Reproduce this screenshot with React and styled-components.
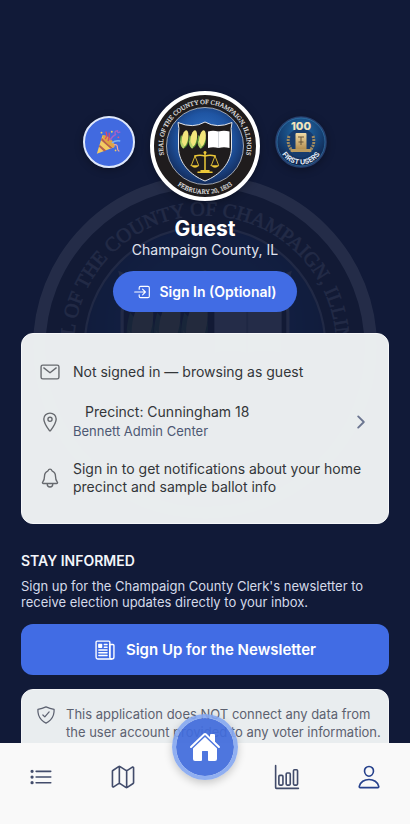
import React from "react";
import styled, { createGlobalStyle } from "styled-components";
import {
  IoBarChartOutline,
  IoChevronForward,
  IoEnterOutline,
  IoHome,
  IoListOutline,
  IoLocationOutline,
  IoMailOutline,
  IoMapOutline,
  IoNewspaperOutline,
  IoNotificationsOutline,
  IoPersonOutline,
  IoShieldCheckmarkOutline,
} from "react-icons/io5";

const CornEar = ({ x }) => (
  <g transform={`translate(${x} 39)`}>
    <path d="M-1 18.500 C-6 15 -4.500 9 -3.500 5 L0 9 Z" fill="#6da545" />
    <path d="M-1 18.500 C4 16 4.500 11 3.800 7 L0 11 Z" fill="#4c8a31" />
    <ellipse cx="0.500" cy="8.500" rx="3.200" ry="8.300" fill="#f2e67c" transform="rotate(10 0.500 8.500)" />
    <path d="M-4 10.500 C-4 14 -3 18 -1 18.500 C1 17.500 -1 14 -4 10.500 Z" fill="#b7d06c" />
  </g>
);

const Seal = ({ id }) => (
  <svg viewBox="0 0 110 110" width="100%" height="100%" aria-hidden="true">
    <defs>
      <radialGradient id={`${id}-blue`} cx="50%" cy="42%" r="58%">
        <stop offset="0" stopColor="#3476c9" />
        <stop offset="0.6" stopColor="#1f55a3" />
        <stop offset="1" stopColor="#132b5a" />
      </radialGradient>
      <path id={`${id}-top`} d="M37.300 152 A84 84 0 1 1 182.700 152" />
      <path id={`${id}-bottom`} d="M36.500 171.700 A96 96 0 0 0 183.500 171.700" />
    </defs>
    <circle cx="55" cy="55" r="53" fill="#1f1c1d" stroke="#ffffff" strokeWidth="4" />
    <circle cx="55" cy="55" r="38.5" fill={`url(#${id}-blue)`} stroke="#d5d8de" strokeWidth="0.7" />
    <g transform="scale(0.5)">
      <SealText>
        <textPath href={`#${id}-top`} startOffset="50%" textAnchor="middle">
          SEAL OF THE COUNTY OF CHAMPAIGN, ILLINOIS
        </textPath>
      </SealText>
      <SealText>
        <textPath href={`#${id}-bottom`} startOffset="50%" textAnchor="middle">
          FEBRUARY 20, 1833
        </textPath>
      </SealText>
    </g>
    <path
      d="M28 31.500 Q43 38 55 31 Q67 38 82 31.500 Q80.500 37 81.500 44 L81.500 57 C81 72 70 84 55 90 C40 84 29 72 28.500 57 L28.500 44 Q29.500 37 28 31.500 Z"
      fill="#1f1c1d"
      stroke="#e3e5ea"
      strokeWidth="1"
    />
    <CornEar x={34.5} />
    <CornEar x={43.2} />
    <CornEar x={51.9} />
    <path d="M58 40.500 Q63 39 68.500 40.500 Q74 39 79.500 40.500 V57 Q74 55.500 68.500 57 Q63 55.500 58 57 Z" fill="#ffffff" />
    <path d="M68.500 40.500 V57" stroke="#b9bdc4" strokeWidth="0.6" />
    <g stroke="#ecc838" strokeWidth="1.500" fill="none" strokeLinecap="round">
      <path d="M55 61.500 V80" />
      <path d="M45 65 Q50 63.500 55 65 Q60 63.500 65 65" />
      <path d="M45 65 L41.500 74 M45 65 L48.500 74 M65 65 L61.500 74 M65 65 L68.500 74" strokeWidth="0.9" />
      <path d="M41 74.500 H49 Q45 78.500 41 74.500 Z M61 74.500 H69 Q65 78.500 61 74.500 Z" fill="#ecc838" strokeWidth="0.5" />
      <path d="M48 81.300 H62 M51 79.800 H59" />
    </g>
    <circle cx="55" cy="61.500" r="1.500" fill="#ecc838" />
  </svg>
);

const PartyPopper = () => (
  <svg viewBox="0 0 32 32" width="30" height="30" aria-hidden="true">
    <path d="M3 28.500 L9 9 Q11 8 16.500 13 Q23 19 21.500 21.500 Z" fill="#f3cb62" />
    <path d="M8.300 11.500 L20 22 L17.500 23 L7.500 14 Z M6 18.800 L13 25 L10.700 26 L5.300 21 Z" fill="#b6604f" />
    <path d="M9 9 Q13 8 18 13 Q23 18 21.500 21.500 Q18 21.500 13.500 17 Q9 12.500 9 9 Z" fill="#dfa542" />
    <path d="M12 13 Q15 9 12.500 5 M15 15 Q17 9 16 6" stroke="#d94d6a" strokeWidth="1.500" fill="none" />
    <path d="M17 14 Q19 10 23 8 Q21 4.500 25 4 Q25 7.500 28 5" stroke="#a261c9" strokeWidth="1.500" fill="none" />
    <path d="M19 17 Q23 14 28 15" stroke="#7fb5f2" strokeWidth="1.500" fill="none" />
    <path d="M21 19 Q25 18 25 22 Q25 25 27 26" stroke="#f4a9a0" strokeWidth="1.300" fill="none" />
    <circle cx="8" cy="6" r="1" fill="#f6cf57" />
    <circle cx="19" cy="5" r="1" fill="#f6cf57" />
    <circle cx="26" cy="11" r="1" fill="#e8577a" />
    <circle cx="23" cy="25" r="0.900" fill="#f6cf57" />
  </svg>
);

const FirstUsersBadge = () => (
  <svg viewBox="0 0 52 52" width="100%" height="100%" aria-hidden="true">
    <defs>
      <radialGradient id="users-blue" cx="50%" cy="30%" r="65%">
        <stop offset="0" stopColor="#2270ad" />
        <stop offset="0.6" stopColor="#164377" />
        <stop offset="1" stopColor="#10234a" />
      </radialGradient>
      <linearGradient id="users-gold" x1="0" y1="0" x2="0" y2="1">
        <stop offset="0" stopColor="#f1dba6" />
        <stop offset="1" stopColor="#b18a4c" />
      </linearGradient>
      <path id="users-arc" d="M3.500 26 A22.500 22.500 0 0 0 48.500 26" />
    </defs>
    <circle cx="26" cy="26" r="25" fill="url(#users-blue)" stroke="#27406f" strokeWidth="1.500" />
    <circle cx="26" cy="26" r="24" fill="none" stroke="#347aae" strokeWidth="0.7" />
    <circle cx="26" cy="27" r="14.500" fill="#173c6e" />
    <path d="M14 20 Q11 30 19 36 M38 20 Q41 30 33 36" fill="none" stroke="#a08b60" strokeWidth="3" strokeDasharray="2 1" />
    <rect x="20.500" y="17" width="11" height="17" rx="1" fill="url(#users-gold)" />
    <path d="M23 21 H29 M26 21 V29 M23.500 26 H28.500" stroke="#695438" strokeWidth="1" />
    <rect x="15.500" y="33" width="21" height="3" rx="1" fill="#b99a60" />
    <BadgeNumber x="26" y="14" textAnchor="middle">100</BadgeNumber>
    <BadgeLabel>
      <textPath href="#users-arc" startOffset="50%" textAnchor="middle">
        FIRST USERS
      </textPath>
    </BadgeLabel>
  </svg>
);

const App = () => {
  return (
    <Shell>
      <GlobalStyle />
      <Scroller>
        <Watermark>
          <Seal id="watermark" />
        </Watermark>
        <Profile>
          <Emblems>
            <Badge $filled>
              <PartyPopper />
            </Badge>
            <Avatar>
              <Seal id="avatar" />
            </Avatar>
            <Badge>
              <FirstUsersBadge />
            </Badge>
          </Emblems>
          <Name>Guest</Name>
          <County>Champaign County, IL</County>
          <SignInButton type="button">
            <IoEnterOutline size={18} />
            Sign In (Optional)
          </SignInButton>
        </Profile>

        <Card>
          <Row>
            <IoMailOutline size={22} />
            <RowText>Not signed in — browsing as guest</RowText>
          </Row>
          <RowLink href="#precinct">
            <IoLocationOutline size={22} />
            <RowText>
              <Precinct>Precinct: Cunningham 18</Precinct>
              <Place>Bennett Admin Center</Place>
            </RowText>
            <IoChevronForward size={20} />
          </RowLink>
          <Row>
            <IoNotificationsOutline size={22} />
            <RowText>
              Sign in to get notifications about your home precinct and sample
              ballot info
            </RowText>
          </Row>
        </Card>

        <Newsletter>
          <SectionTitle>STAY INFORMED</SectionTitle>
          <SectionText>
            Sign up for the Champaign County Clerk's newsletter to receive
            election updates directly to your inbox.
          </SectionText>
          <NewsletterButton type="button">
            <IoNewspaperOutline size={22} />
            Sign Up for the Newsletter
          </NewsletterButton>
        </Newsletter>

        <Notice>
          <IoShieldCheckmarkOutline size={20} />
          <NoticeText>
            This application does NOT connect any data from the user account
            provided to any voter information.
          </NoticeText>
        </Notice>
      </Scroller>

      <TabBar>
        <Tab href="#list" aria-label="List">
          <IoListOutline size={26} />
        </Tab>
        <Tab href="#map" aria-label="Map">
          <IoMapOutline size={26} />
        </Tab>
        <HomeTab href="#home" aria-label="Home">
          <IoHome size={32} />
        </HomeTab>
        <Tab href="#results" aria-label="Results">
          <IoBarChartOutline size={26} />
        </Tab>
        <Tab href="#profile" aria-label="Profile" $active>
          <IoPersonOutline size={26} />
        </Tab>
      </TabBar>
    </Shell>
  );
};

const GlobalStyle = createGlobalStyle`
  * {
    box-sizing: border-box;
  }
  body {
    margin: 0;
    background: #111a38;
    font-family: Inter, "Liberation Sans", sans-serif;
  }
  svg {
    flex-shrink: 0;
  }
`;
const Shell = styled.div`
  display: flex;
  flex-direction: column;
  height: 100vh;
  background: #111a38;
`;
const Scroller = styled.main`
  position: relative;
  flex: 1;
  min-height: 0;
  padding: 91px 21px 0;
  overflow-x: hidden;
  overflow-y: auto;
  scrollbar-width: none;
`;
const Watermark = styled.div`
  position: absolute;
  top: 175px;
  left: 50%;
  width: 344px;
  height: 344px;
  transform: translateX(-50%);
  opacity: 0.08;
  pointer-events: none;
`;
const Profile = styled.header`
  position: relative;
  display: flex;
  flex-direction: column;
  align-items: center;
`;
const Emblems = styled.div`
  display: flex;
  justify-content: center;
  align-items: center;
  gap: 15px;
`;
const Avatar = styled.div`
  width: 110px;
  height: 110px;
  border-radius: 50%;
  box-shadow: 0 2px 8px rgba(0, 0, 0, 0.3);
`;
const Badge = styled.div`
  display: flex;
  justify-content: center;
  align-items: center;
  width: 52px;
  height: 52px;
  margin-bottom: 8px;
  border: ${(props) => (props.$filled ? "2px solid #dfe8fb" : "none")};
  border-radius: 50%;
  background: ${(props) => (props.$filled ? "#416ae0" : "transparent")};
  box-shadow: 0 2px 8px rgba(0, 0, 0, 0.3);
`;
const SealText = styled.text`
  font-family: "Liberation Serif", serif;
  font-size: 13px;
  fill: #e9e9ea;
  stroke: #e9e9ea;
  stroke-width: 0.3px;
`;
const BadgeNumber = styled.text`
  font-family: Inter, sans-serif;
  font-size: 11px;
  font-weight: 800;
  fill: #f3e3ba;
`;
const BadgeLabel = styled.text`
  font-family: Inter, sans-serif;
  font-size: 7px;
  font-weight: 700;
  fill: #e6edf6;
`;
const Name = styled.h1`
  margin: 15px 0 0;
  font-size: 21px;
  font-weight: 700;
  line-height: 26px;
  color: #ffffff;
`;
const County = styled.p`
  margin: 0;
  font-size: 14px;
  line-height: 16px;
  color: #e0e4ef;
`;
const SignInButton = styled.button`
  display: flex;
  align-items: center;
  gap: 8px;
  margin-top: 13px;
  padding: 0 20px;
  height: 41px;
  border: none;
  border-radius: 21px;
  background: #416ce4;
  font-family: inherit;
  font-size: 14px;
  font-weight: 600;
  color: #ffffff;
`;
const Card = styled.section`
  position: relative;
  display: flex;
  flex-direction: column;
  gap: 20px;
  margin-top: 21px;
  padding: 27px 17px;
  border: 1px solid #f6f7f9;
  border-radius: 12px;
  background: rgba(238, 241, 242, 0.98);
`;
const Row = styled.div`
  display: flex;
  align-items: center;
  gap: 12px;
  font-size: 14px;
  line-height: 18px;
  color: #333639;

  svg {
    color: #66696e;
  }
`;
const RowLink = styled(Row).attrs({ as: "a" })`
  text-decoration: none;

  svg:last-child {
    color: #6b7590;
  }
`;
const RowText = styled.div`
  flex: 1;
`;
const Precinct = styled.div`
  padding-left: 12px;
`;
const Place = styled.div`
  padding-top: 1px;
  font-size: 13px;
  color: #4d5873;
`;
const Newsletter = styled.section`
  position: relative;
  margin-top: 28px;
`;
const SectionTitle = styled.h2`
  margin: 0 0 8px;
  font-size: 14px;
  font-weight: 600;
  line-height: 18px;
  color: #f3f5fa;
`;
const SectionText = styled.p`
  margin: 0;
  font-size: 13px;
  line-height: 16px;
  color: #d5daea;
`;
const NewsletterButton = styled.button`
  display: flex;
  justify-content: center;
  align-items: center;
  gap: 10px;
  width: 100%;
  height: 51px;
  margin-top: 14px;
  border: none;
  border-radius: 12px;
  background: #416ce4;
  font-family: inherit;
  font-size: 15px;
  font-weight: 600;
  color: #ffffff;
`;
const Notice = styled.section`
  position: relative;
  display: flex;
  gap: 10px;
  margin-top: 14px;
  padding: 15px 6px 15px 14px;
  border: 1px solid #f3f4f6;
  border-radius: 12px;
  background: #e9edef;
  color: #5c6170;
`;
const NoticeText = styled.p`
  margin: 0;
  font-size: 13px;
  line-height: 18px;
`;
const TabBar = styled.nav`
  position: relative;
  display: grid;
  grid-template-columns: repeat(5, 1fr);
  align-items: start;
  height: 81px;
  background: #f9f9f9;
`;
const Tab = styled.a`
  display: flex;
  justify-content: center;
  align-items: center;
  height: 67px;
  color: ${(props) => (props.$active ? "#26418c" : "#424c6b")};
`;
const HomeTab = styled.a`
  display: flex;
  justify-content: center;
  align-items: center;
  justify-self: center;
  width: 66px;
  height: 66px;
  margin-top: -29px;
  border: 4px solid rgba(132, 166, 240, 0.9);
  border-radius: 50%;
  background: rgba(65, 108, 220, 0.93);
  background-clip: padding-box;
  box-shadow: 0 3px 8px rgba(0, 0, 0, 0.2);
  color: #ffffff;
`;

export default App;
